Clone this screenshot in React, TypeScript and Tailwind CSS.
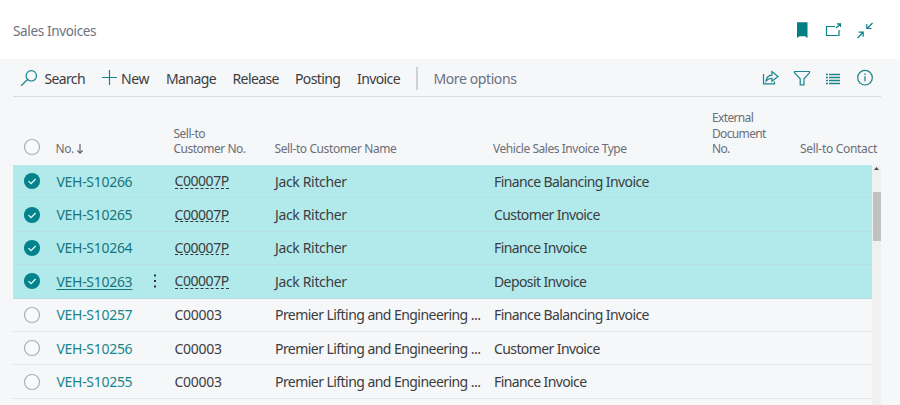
import React from "react";

type Row = { no: string; customer: string; name: string; type: string; selected: boolean; active?: boolean };

const premier = "Premier Lifting and Engineering ...";

const rows: Row[] = [
  { no: "VEH-S10266", customer: "C00007P", name: "Jack Ritcher", type: "Finance Balancing Invoice", selected: true },
  { no: "VEH-S10265", customer: "C00007P", name: "Jack Ritcher", type: "Customer Invoice", selected: true },
  { no: "VEH-S10264", customer: "C00007P", name: "Jack Ritcher", type: "Finance Invoice", selected: true },
  { no: "VEH-S10263", customer: "C00007P", name: "Jack Ritcher", type: "Deposit Invoice", selected: true, active: true },
  { no: "VEH-S10257", customer: "C00003", name: premier, type: "Finance Balancing Invoice", selected: false },
  { no: "VEH-S10256", customer: "C00003", name: premier, type: "Customer Invoice", selected: false },
  { no: "VEH-S10255", customer: "C00003", name: premier, type: "Finance Invoice", selected: false },
];

const columns = "grid grid-cols-[43.5px_84px_34px_100.5px_219px_218px_88px_1fr]";

function Check({ on }: { on: boolean }) {
  return (
    <svg className="ml-[10px] block" width="18" height="18" viewBox="0 0 18 18" fill="none">
      {on ? (
        <>
          <circle cx="9" cy="9" r="8.1" fill="#04838c" />
          <path d="M5.5 9.1l2.600 2.500 4.500-4.600" stroke="#e6f8f8" strokeWidth="1.3" />
        </>
      ) : (
        <circle cx="9" cy="9" r="7.5" stroke="#a9adb8" strokeWidth="1.200" fill="#f9fafb" />
      )}
    </svg>
  );
}

function TopIcons() {
  return (
    <div className="flex items-center text-[#0b8087]">
      <svg width="12" height="18" viewBox="0 0 12 18" className="mr-[16px]">
        <path d="M1 1.200h10.500v15.800L9 15.300H3.500L1 17z" fill="#047f86" />
      </svg>
      <svg width="18" height="18" viewBox="0 0 18 18" fill="none" stroke="currentColor" className="mr-[14px]">
        <path d="M11 5.500H2.500v9h12.500V9M12 7l4.500-4M13 2.800h3.500v3.200" strokeWidth="1.200" />
      </svg>
      <svg width="18" height="18" viewBox="0 0 18 18" fill="none" stroke="currentColor">
        <path d="M16.500 2l-5.500 5.500M10.800 3v4.500h4.500M1.500 17l5.500-5.500M2.700 11.200h4.500v4.500" strokeWidth="1.200" />
      </svg>
    </div>
  );
}

function ToolIcons() {
  return (
    <div className="flex items-center text-[#1c858b]">
      <svg width="18" height="18" viewBox="0 0 18 18" fill="none" stroke="currentColor" className="mr-[13px]">
        <path d="M1.500 5v9.800h11v-2.300" strokeWidth="1.200" />
        <path d="M4 12c.5-3.800 2.600-5.700 6-5.900V2.500l6 5-6 4.700V9.300c-2.700 0-4.300.7-6 2.700z" strokeWidth="1.200" />
      </svg>
      <svg width="18" height="18" viewBox="0 0 18 18" fill="none" stroke="currentColor" className="mr-[14px]">
        <path d="M1.500 2.500h15v1.300l-5.500 6v6H7.200v-6L1.500 3.800z" strokeWidth="1.200" />
      </svg>
      <svg width="16" height="18" viewBox="0 0 16 18" fill="none" stroke="currentColor" className="mr-[15px]">
        <path d="M1 5.500h2M4 5.500h11M1 8.500h2M4 8.500h11M1 11.500h2M4 11.500h11M1 14.500h2M4 14.500h11" strokeWidth="1.300" />
      </svg>
      <svg width="18" height="18" viewBox="0 0 18 18" fill="none" stroke="currentColor">
        <circle cx="9" cy="8.700" r="7.300" strokeWidth="1.200" />
        <path d="M9 7.200v5M9 4.500v1.400" strokeWidth="1.300" />
      </svg>
    </div>
  );
}

export default function App() {
  return (
    <div className="flex h-[405px] w-[900px] flex-col overflow-hidden bg-[#f6f7f9] font-['Noto_Sans','Segoe_UI',sans-serif] whitespace-nowrap text-[#3b3d40]">
      <header className="flex h-[59px] shrink-0 items-center justify-between bg-white pt-[3px] pr-[26px] pl-[13px]">
        <h1 className="text-[13.5px] tracking-[-0.35px] text-[#6b7280]">Sales Invoices</h1>
        <div className="-mt-[2px]"><TopIcons /></div>
      </header>
      <div className="mr-[19px] ml-[13px] flex h-[38px] shrink-0 items-center justify-between border-b border-[#d9dbde] pr-[7px] pl-[7px]">
        <nav className="flex items-center pt-px text-[14px] tracking-[-0.4px]">
          <svg width="18" height="18" viewBox="0 0 18 18" fill="none" stroke="#1c858b" className="mr-[6.5px]">
            <circle cx="11.300" cy="6.800" r="5.200" strokeWidth="1.200" />
            <path d="M7.500 10.500l-6.300 6.200" strokeWidth="1.200" />
          </svg>
          <span className="w-[55.500px] tracking-[-0.65px]">Search</span>
          <svg width="18" height="18" viewBox="0 0 18 18" stroke="#1c858b" className="mr-[3px]">
            <path d="M9.500 1v15M2 8.500h15" strokeWidth="1.200" />
          </svg>
          <span className="w-[45px]">New</span>
          <span className="w-[66.500px] tracking-[-0.6px]">Manage</span>
          <span className="w-[62.500px] tracking-[-0.6px]">Release</span>
          <span className="w-[62px] tracking-[-0.6px]">Posting</span>
          <span className="w-[59px] tracking-[-0.6px]">Invoice</span>
          <span className="mr-[16px] h-[23px] w-[1.500px] bg-[#cfd2d6]" />
          <span className="text-[#687284] tracking-[-0.4px]">More options</span>
        </nav>
        <ToolIcons />
      </div>
      <div className={`${columns} mr-[19px] ml-[13px] h-[68px] shrink-0 items-end pb-[8px] text-[12px] leading-[15.7px] tracking-[-0.45px] text-[#6a6f78]`}>
        <div className="mb-px"><Check on={false} /></div>
        <span className="-ml-px flex items-center">
          No.
          <svg width="8" height="12" viewBox="0 0 8 12" fill="none" stroke="#62676f" className="ml-[2px]">
            <path d="M4 1v9M1.300 7.500L4 10.200l2.700-2.700" strokeWidth="1.200" />
          </svg>
        </span>
        <span />
        <span className="-ml-px tracking-[-0.5px]">Sell-to<br />Customer No.</span>
        <span className="-ml-[0.5px] tracking-[-0.4px]">Sell-to Customer Name</span>
        <span className="-ml-px">Vehicle Sales Invoice Type</span>
        <span className="tracking-[-0.65px]">External<br />Document<br />No.</span>
        <span className="tracking-[-0.3px]">Sell-to Contact</span>
      </div>
      <div className="mr-[19px] ml-[13px] flex flex-1">
        <div className="flex-1">
          {rows.map((row) => (
            <div
              key={row.no}
              className={`${columns} h-[33.4px] items-center border-b text-[14px] tracking-[-0.3px] ${
                row.selected ? "border-[#b8dfe2] bg-[#b2eaec]" : "border-[#e2e4e7]"
              }`}
            >
              <Check on={row.selected} />
              <span className={`${row.selected ? "text-[#17757b]" : "text-[#18868b]"} ${row.active ? "underline underline-offset-2" : ""}`}>{row.no}</span>
              <span className="-ml-[6px] flex justify-center">
                {row.active && (
                  <svg width="4" height="16" viewBox="0 0 4 16" fill="#333">
                    <path d="M1 1.500h2v2H1zM1 7h2v2H1zM1 12.500h2v2H1z" />
                  </svg>
                )}
              </span>
              <span className="flex">
                <span className={row.selected ? "flex h-[15px] items-center border-b border-dashed border-[#30383a] tracking-[-0.45px]" : ""}>{row.customer}</span>
              </span>
              <span className={row.selected ? "tracking-[-0.35px]" : "tracking-[-0.55px]"}>{row.name}</span>
              <span className="tracking-[-0.6px]">{row.type}</span>
            </div>
          ))}
        </div>
        <div className="flex w-[9px] flex-col items-center bg-[#f0f0f0]">
          <svg width="5" height="3" viewBox="0 0 5 3" className="mt-[2px]">
            <path d="M2.500 0L5 3H0z" fill="#4b4b4b" />
          </svg>
          <div className="mt-[22px] h-[49px] w-[8px] bg-[#c1c1c1]" />
        </div>
      </div>
    </div>
  );
}
